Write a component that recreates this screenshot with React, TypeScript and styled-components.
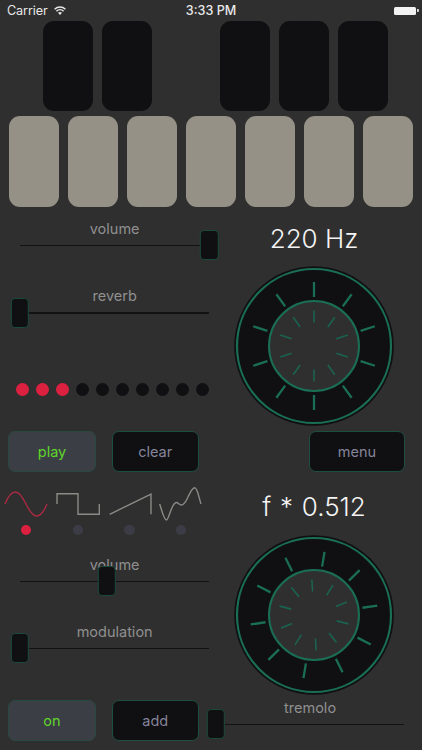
import React from "react";
import styled, { createGlobalStyle } from "styled-components";

const green = "#1a6e54";
const ink = "#100f12";

const Global = createGlobalStyle`
  html, body { margin: 0; padding: 0; background: #2f2f2f; }
  body { font-family: Inter, "Liberation Sans", sans-serif; }
`;

const Screen = styled.div`
  width: 422px;
  height: 750px;
  overflow: hidden;
  background: #2f2f2f;
`;

const StatusBar = styled.div`
  height: 21px;
  position: relative;
  display: flex;
  align-items: center;
  padding: 0 6px 0 7px;
  color: #e8e8e8;
  font-size: 12.6px;
  box-sizing: border-box;
`;
const Carrier = styled.span`
  margin-right: 6px;
  letter-spacing: -0.1px;
`;
const Clock = styled.span`
  position: absolute;
  left: 0;
  right: 0;
  text-align: center;
  font-weight: 500;
  pointer-events: none;
`;
const Battery = styled.div`
  margin-left: auto;
  width: 22px;
  height: 8px;
  background: #f2f2f2;
  border-radius: 1.5px;
  position: relative;
  &::after {
    content: "";
    position: absolute;
    right: -2.5px;
    top: 2.5px;
    width: 1.5px;
    height: 3px;
    background: #d8d8d8;
    border-radius: 0 1px 1px 0;
  }
`;

const KeyRow = styled.div<{ $inset: number; $top?: number }>`
  display: flex;
  gap: 8.33px;
  padding-left: ${(p) => p.$inset}px;
  margin-top: ${(p) => p.$top ?? 0}px;
`;
const Key = styled.div<{ $tone: "black" | "white" | "gap" }>`
  width: 50.67px;
  height: ${(p) => (p.$tone === "white" ? 91 : 90.3)}px;
  border-radius: 11px;
  flex: none;
  box-sizing: border-box;
  background: ${(p) =>
    p.$tone === "white" ? "#959186" : p.$tone === "black" ? ink : "transparent"};
`;

const Panel = styled.div<{ $height: number }>`
  display: grid;
  grid-template-columns: 225px 178px;
  height: ${(p) => p.$height}px;
`;
const LeftColumn = styled.div<{ $top: number }>`
  padding-top: ${(p) => p.$top}px;
  display: flex;
  flex-direction: column;
`;
const RightColumn = styled.div<{ $top: number }>`
  padding-top: ${(p) => p.$top}px;
  display: flex;
  flex-direction: column;
  align-items: center;
`;
const Readout = styled.div<{ $spread?: number }>`
  color: #f4f4f4;
  font-size: 26px;
  font-weight: 300;
  word-spacing: ${(p) => p.$spread ?? 0}px;
  line-height: 32px;
  height: 32px;
  margin-bottom: 11.5px;
  white-space: nowrap;
`;

const SliderBox = styled.div<{ $left: number; $width: number; $top?: number }>`
  margin-left: ${(p) => p.$left}px;
  margin-top: ${(p) => p.$top ?? 0}px;
  width: ${(p) => p.$width}px;
  flex: none;
`;
const SliderLabel = styled.div`
  color: #8f8f8f;
  font-size: 14.5px;
  line-height: 20px;
  height: 20px;
  text-align: center;
`;
const TrackArea = styled.div`
  height: 13px;
  position: relative;
  display: flex;
  align-items: center;
`;
const Rail = styled.div`
  height: 1.6px;
  width: 100%;
  background: #121114;
`;
const Thumb = styled.div`
  position: absolute;
  top: 50%;
  width: 18.4px;
  height: 30px;
  transform: translate(-50%, -50%);
  background: ${ink};
  border: 1.2px solid #1b4a3b;
  border-radius: 4px;
  box-sizing: border-box;
`;

const Dots = styled.div`
  display: flex;
  gap: 6.67px;
  margin: 63.5px 0 0 15.7px;
`;
const Dot = styled.div<{ $on: boolean }>`
  width: 13.33px;
  height: 13.33px;
  border-radius: 50%;
  background: ${(p) => (p.$on ? "#dc2040" : ink)};
`;

const ButtonRow = styled.div`
  display: flex;
  gap: 16px;
  height: 41px;
  padding-left: 8.3px;
`;
const Button = styled.div<{ $active?: boolean; $width: number; $push?: number }>`
  width: ${(p) => p.$width}px;
  margin-left: ${(p) => p.$push ?? 0}px;
  flex: none;
  box-sizing: border-box;
  display: flex;
  align-items: center;
  justify-content: center;
  border-radius: 7px;
  border: 1.4px solid ${(p) => (p.$active ? "#27493f" : "#1c4f3f")};
  background: ${(p) => (p.$active ? "#3c3e46" : ink)};
  color: ${(p) => (p.$active ? "#5fd52a" : "#85859b")};
  font-size: 14.5px;
`;

const WaveRow = styled.div`
  display: grid;
  grid-template-columns: repeat(4, 51.67px);
  padding-left: 0.33px;
`;
const WaveCell = styled.div`
  display: flex;
  flex-direction: column;
  align-items: center;
  gap: 4px;
`;
const WaveDot = styled.div<{ $on: boolean }>`
  width: 10.5px;
  height: 10.5px;
  border-radius: 50%;
  background: ${(p) => (p.$on ? "#dc2040" : "#3c3c47")};
`;

function Slider(props: { label: string; value: number; left: number; width: number; top?: number }) {
  return (
    <SliderBox $left={props.left} $width={props.width} $top={props.top}>
      <SliderLabel>{props.label}</SliderLabel>
      <TrackArea>
        <Rail />
        <Thumb style={{ left: `${props.value * 100}%` }} />
      </TrackArea>
    </SliderBox>
  );
}

function Knob({ outer, inner }: { outer: number; inner: number }) {
  const angles = Array.from({ length: 10 }, (_, i) => i * 36);
  return (
    <svg width="160" height="160" viewBox="-80 -80 160 160" style={{ flex: "none" }}>
      <circle r="79.8" fill={ink} />
      <circle r="77" fill="none" stroke={green} strokeWidth="2.2" />
      {angles.map((a) => (
        <line key={a} x1="0" y1="-49" x2="0" y2="-64" stroke={green} strokeWidth="2.3" transform={`rotate(${a + outer})`} />
      ))}
      <circle r="45" fill="#2f2f2f" stroke={green} strokeWidth="2" />
      {angles.map((a) => (
        <line key={a} x1="0" y1="-23.5" x2="0" y2="-35.5" stroke="#1a6350" strokeWidth="1.6" transform={`rotate(${a + inner})`} />
      ))}
    </svg>
  );
}

const waves = [
  { d: "M5 17 C8 9.5 11.5 5 15.5 5 S22.5 10 26 17 S32.5 29 36.5 29 S44 24.5 47 17", color: "#a82a42" },
  { d: "M5 17 V6.7 H26 V27.3 H47.3 V17", color: "#8a8a86" },
  { d: "M5.7 27.3 L47 7 V27.3", color: "#8a8a86" },
  { d: "M4.7 17 C7 24 9 33 11.5 33 C14 33 16.5 15.5 21.3 15.5 C23.5 15.5 24 18 26.3 18 C29.5 18 31 14 33 10 C35 6 37 0.8 39.7 0.8 C42.5 0.8 44 11 46 17", color: "#8a8a86" },
];

export default function App() {
  return (
    <Screen>
      <Global />
      <StatusBar>
        <Carrier>Carrier</Carrier>
        <svg width="12" height="9" viewBox="0 0 12 9">
          <path d="M0.6 3.2 A8 8 0 0 1 11.4 3.2" fill="none" stroke="#e8e8e8" strokeWidth="1.5" />
          <path d="M2.4 5.2 A5.2 5.2 0 0 1 9.6 5.2" fill="none" stroke="#e8e8e8" strokeWidth="1.5" />
          <path d="M6 8.9 L4 6.8 A3 3 0 0 1 8 6.8 Z" fill="#e8e8e8" />
        </svg>
        <Clock>3:33 PM</Clock>
        <Battery />
      </StatusBar>
      <KeyRow $inset={42.67}>
        <Key $tone="black" />
        <Key $tone="black" />
        <Key $tone="gap" />
        <Key $tone="black" />
        <Key $tone="black" />
        <Key $tone="black" />
      </KeyRow>
      <KeyRow $inset={8.67} $top={5}>
        {Array.from({ length: 7 }, (_, i) => (
          <Key key={i} $tone="white" />
        ))}
      </KeyRow>

      <Panel $height={223.7}>
        <LeftColumn $top={11.7}>
          <Slider label="volume" value={1} left={20} width={189.3} />
          <Slider label="reverb" value={0} left={20} width={189.3} top={34.5} />
          <Dots>
            {Array.from({ length: 10 }, (_, i) => (
              <Dot key={i} $on={i < 3} />
            ))}
          </Dots>
        </LeftColumn>
        <RightColumn $top={15.7}>
          <Readout>220 Hz</Readout>
          <Knob outer={0} inner={0} />
        </RightColumn>
      </Panel>

      <ButtonRow>
        <Button $active $width={87.4}>play</Button>
        <Button $width={87}>clear</Button>
        <Button $width={96} $push={94.3}>menu</Button>
      </ButtonRow>

      <Panel $height={228}>
        <LeftColumn $top={15}>
          <WaveRow>
            {waves.map((w, i) => (
              <WaveCell key={i}>
                <svg width="51.67" height="34" viewBox="0 0 51.67 34">
                  <path d={w.d} fill="none" stroke={w.color} strokeWidth="1.4" />
                </svg>
                <WaveDot $on={i === 0} />
              </WaveCell>
            ))}
          </WaveRow>
          <Slider label="volume" value={0.458} left={20} width={189.3} top={19.5} />
          <Slider label="modulation" value={0} left={20} width={189.3} top={34} />
        </LeftColumn>
        <RightColumn $top={19.5}>
          <Readout $spread={1.5}>f * 0.512</Readout>
          <Knob outer={9.5} inner={-3.5} />
        </RightColumn>
      </Panel>

      <ButtonRow>
        <Button $active $width={87.4}>on</Button>
        <Button $width={87}>add</Button>
        <Slider label="tremolo" value={0} left={1} width={188.8} top={-2} />
      </ButtonRow>
    </Screen>
  );
}
